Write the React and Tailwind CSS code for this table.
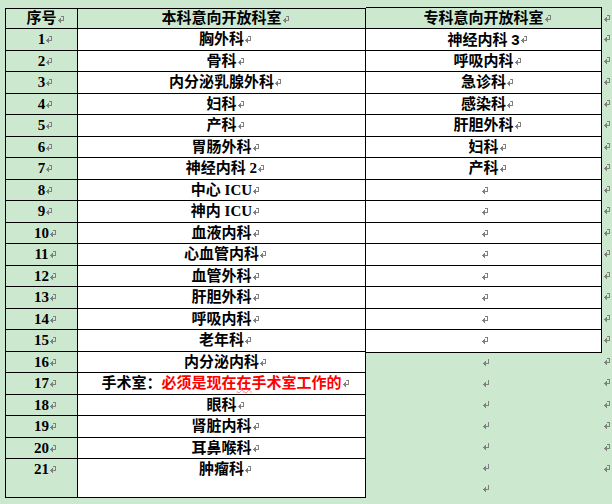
import React from "react";

const Mark = ({ tick = true }) => (
  <svg width="7" height="7" viewBox="0 0 7 7" shapeRendering="crispEdges" className="block">
    <g fill="#808080">
      <rect x="5" y={tick ? 1 : 0} width="1" height={tick ? 4 : 5} />
      {tick && <rect x="3" y="0" width="3" height="1" />}
      <rect x="1" y="4" width="5" height="1" />
      <rect x="0" y="4" width="1" height="1" />
      <rect x="1" y="3" width="1" height="3" />
      <rect x="2" y="2" width="1" height="5" />
    </g>
  </svg>
);

const WithMark = ({ children }) => (
  <span className="relative inline-block whitespace-pre">
    {children}
    <span className="absolute left-full top-[7px] ml-[1px]">
      <Mark />
    </span>
  </span>
);

const left = [
  "胸外科",
  "骨科",
  "内分泌乳腺外科",
  "妇科",
  "产科",
  "胃肠外科",
  "神经内科 2",
  "中心 ICU",
  "神内 ICU",
  "血液内科",
  "心血管内科",
  "血管外科",
  "肝胆外科",
  "呼吸内科",
  "老年科",
  "内分泌内科",
  "SPECIAL",
  "眼科",
  "肾脏内科",
  "耳鼻喉科",
  "肿瘤科",
];

const right = [
  "神经内科 3",
  "呼吸内科",
  "急诊科",
  "感染科",
  "肝胆外科",
  "妇科",
  "产科",
  "",
  "",
  "",
  "",
  "",
  "",
  "",
  "",
];

const rowH = (i) =>
  i === 20 ? "h-[38px]" : i % 2 === 0 ? "h-[22px]" : "h-[21px]";

export default function App() {
  return (
    <div className="w-[612px] h-[504px] bg-[#cce8cf] overflow-hidden font-['Liberation_Serif','Noto_Sans_CJK_SC',serif] font-bold text-[15px] leading-[21px] text-black">
      <div className="flex items-start pl-[5px] pt-[8px]">
        {/* Left table */}
        <div className="w-[361px] border border-black">
          <div className="flex h-[20px] border-b border-black bg-[#cce8cf] leading-[19px]">
            <div className="w-[72px] border-r border-black flex justify-center">
              <WithMark>序号</WithMark>
            </div>
            <div className="flex-1 flex justify-center">
              <WithMark>本科意向开放科室</WithMark>
            </div>
          </div>
          {left.map((t, i) => (
            <div
              key={i}
              className={`flex ${rowH(i)} ${i === 20 ? "" : "border-b border-black"}`}
            >
              <div className="w-[72px] border-r border-black bg-[#cce8cf] flex justify-center items-start">
                <WithMark>{String(i + 1)}</WithMark>
              </div>
              <div className="flex-1 bg-white flex justify-center items-start">
                {t === "SPECIAL" ? (
                  <WithMark>
                    手术室：
                    <span className="text-[#ff0000]">
                      必须是现在
                      <span className="underline decoration-wavy decoration-[#ff7a7a] decoration-1 underline-offset-[1px]">
                        在
                      </span>
                      手术室工作的
                    </span>
                  </WithMark>
                ) : (
                  <WithMark>{t}</WithMark>
                )}
              </div>
            </div>
          ))}
        </div>

        {/* Right table + empty paragraphs below */}
        <div className="w-[236px] -mt-px flex flex-col">
          <div className="border-t border-r border-b border-black">
            <div className="flex h-[21px] border-b border-black bg-[#cce8cf] justify-center leading-[21px]">
              <WithMark>专科意向开放科室</WithMark>
            </div>
            {right.map((t, i) => (
              <div
                key={i}
                className={`flex ${rowH(i)} ${i === 14 ? "" : "border-b border-black"} bg-white justify-center items-start`}
              >
                {t ? (
                  t === "神经内科 3" ? (
                    <WithMark>
                      神经内科 <span className="font-['Liberation_Sans']">3</span>
                    </WithMark>
                  ) : (
                    <WithMark>{t}</WithMark>
                  )
                ) : (
                  <div className="pt-[7px] pl-[4px]">
                    <Mark />
                  </div>
                )}
              </div>
            ))}
          </div>
          <div className="flex flex-col">
            {[0, 1, 2, 3, 4, 5, 6].map((k) => (
              <div key={k} className="h-[21px] flex justify-center pt-[6px] pl-[4px]">
                <Mark tick={false} />
              </div>
            ))}
          </div>
        </div>

        {/* End-of-row marks */}
        <div className="flex flex-col pl-[2px] pt-[1px]">
          <div className="h-[20px] pt-[6px]">
            <Mark />
          </div>
          {left.map((_, i) => (
            <div key={i} className={`${rowH(i)} pt-[6px]`}>
              <Mark />
            </div>
          ))}
        </div>
      </div>
    </div>
  );
}
